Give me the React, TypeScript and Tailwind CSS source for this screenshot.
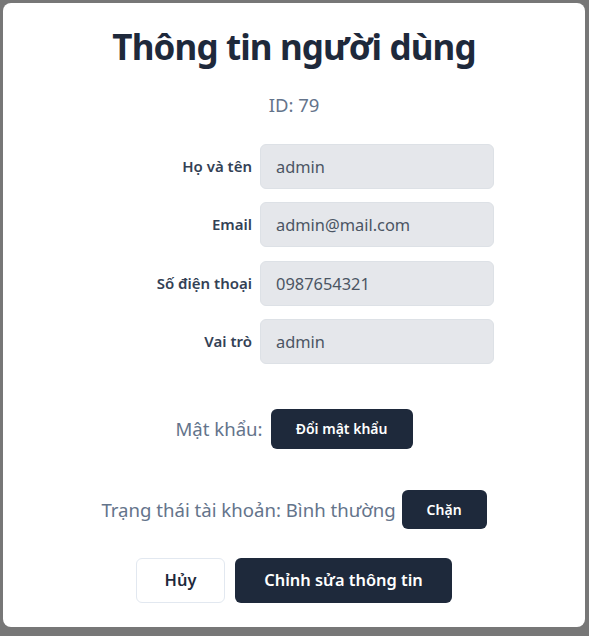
import { useState } from "react";

type Field = { label: string; value: string };

const fields: Field[] = [
  { label: "Họ và tên", value: "admin" },
  { label: "Email", value: "admin@mail.com" },
  { label: "Số điện thoại", value: "0987654321" },
  { label: "Vai trò", value: "admin" },
];

export default function App() {
  const [status] = useState("Bình thường");

  return (
    <div
      className="h-[636px] w-[589px] bg-[#777777] pl-[3px] pt-[3px]"
      style={{ fontFamily: '"Noto Sans", "Open Sans", sans-serif' }}
    >
      <div className="flex h-[624px] w-[582px] flex-col items-center rounded-lg bg-white pt-[24px] pb-6">
        <h1 className="text-[35px] leading-10 font-bold tracking-tight text-[#1e293b]">Thông tin người dùng</h1>
        <p className="mt-[23.5px] text-[18.5px] leading-7 text-[#64748b]">ID: 79</p>

        <form className="mt-[25px] flex flex-col gap-[13.5px] pl-[58px]">
          {fields.map((f) => (
            <div key={f.label} className="flex items-center gap-2">
              <label className="w-[100px] text-right text-[15px] font-semibold text-[#334155]">
                {f.label}
              </label>
              <input
                readOnly
                value={f.value}
                className="h-[45px] w-[234px] rounded-md border border-[#dde1e6] bg-[#e5e7eb] px-[15px] text-[16.4px] text-[#4b5563] outline-none"
              />
            </div>
          ))}
        </form>

        <div className="mt-[45px] flex items-center gap-[8px]">
          <span className="text-[18.6px] text-[#64748b]">Mật khẩu:</span>
          <button className="h-[40px] w-[142px] rounded-md bg-[#1e293b] text-sm font-semibold text-white">
            Đổi mật khẩu
          </button>
        </div>

        <div className="mt-[41px] flex items-center gap-[6px]">
          <span className="text-[18.6px] text-[#64748b]">Trạng thái tài khoản: {status}</span>
          <button className="h-[39px] w-[85px] rounded-md bg-[#1e293b] text-sm font-semibold text-white">
            Chặn
          </button>
        </div>

        <div className="mt-[29px] flex items-center gap-[10px]">
          <button className="h-[45px] w-[89px] rounded-md border border-[#e2e8f0] bg-white text-[16.4px] font-semibold text-[#1e293b]">
            Hủy
          </button>
          <button className="h-[45px] w-[217px] rounded-md bg-[#1e293b] text-[16.4px] font-semibold text-white">
            Chỉnh sửa thông tin
          </button>
        </div>
      </div>
    </div>
  );
}
